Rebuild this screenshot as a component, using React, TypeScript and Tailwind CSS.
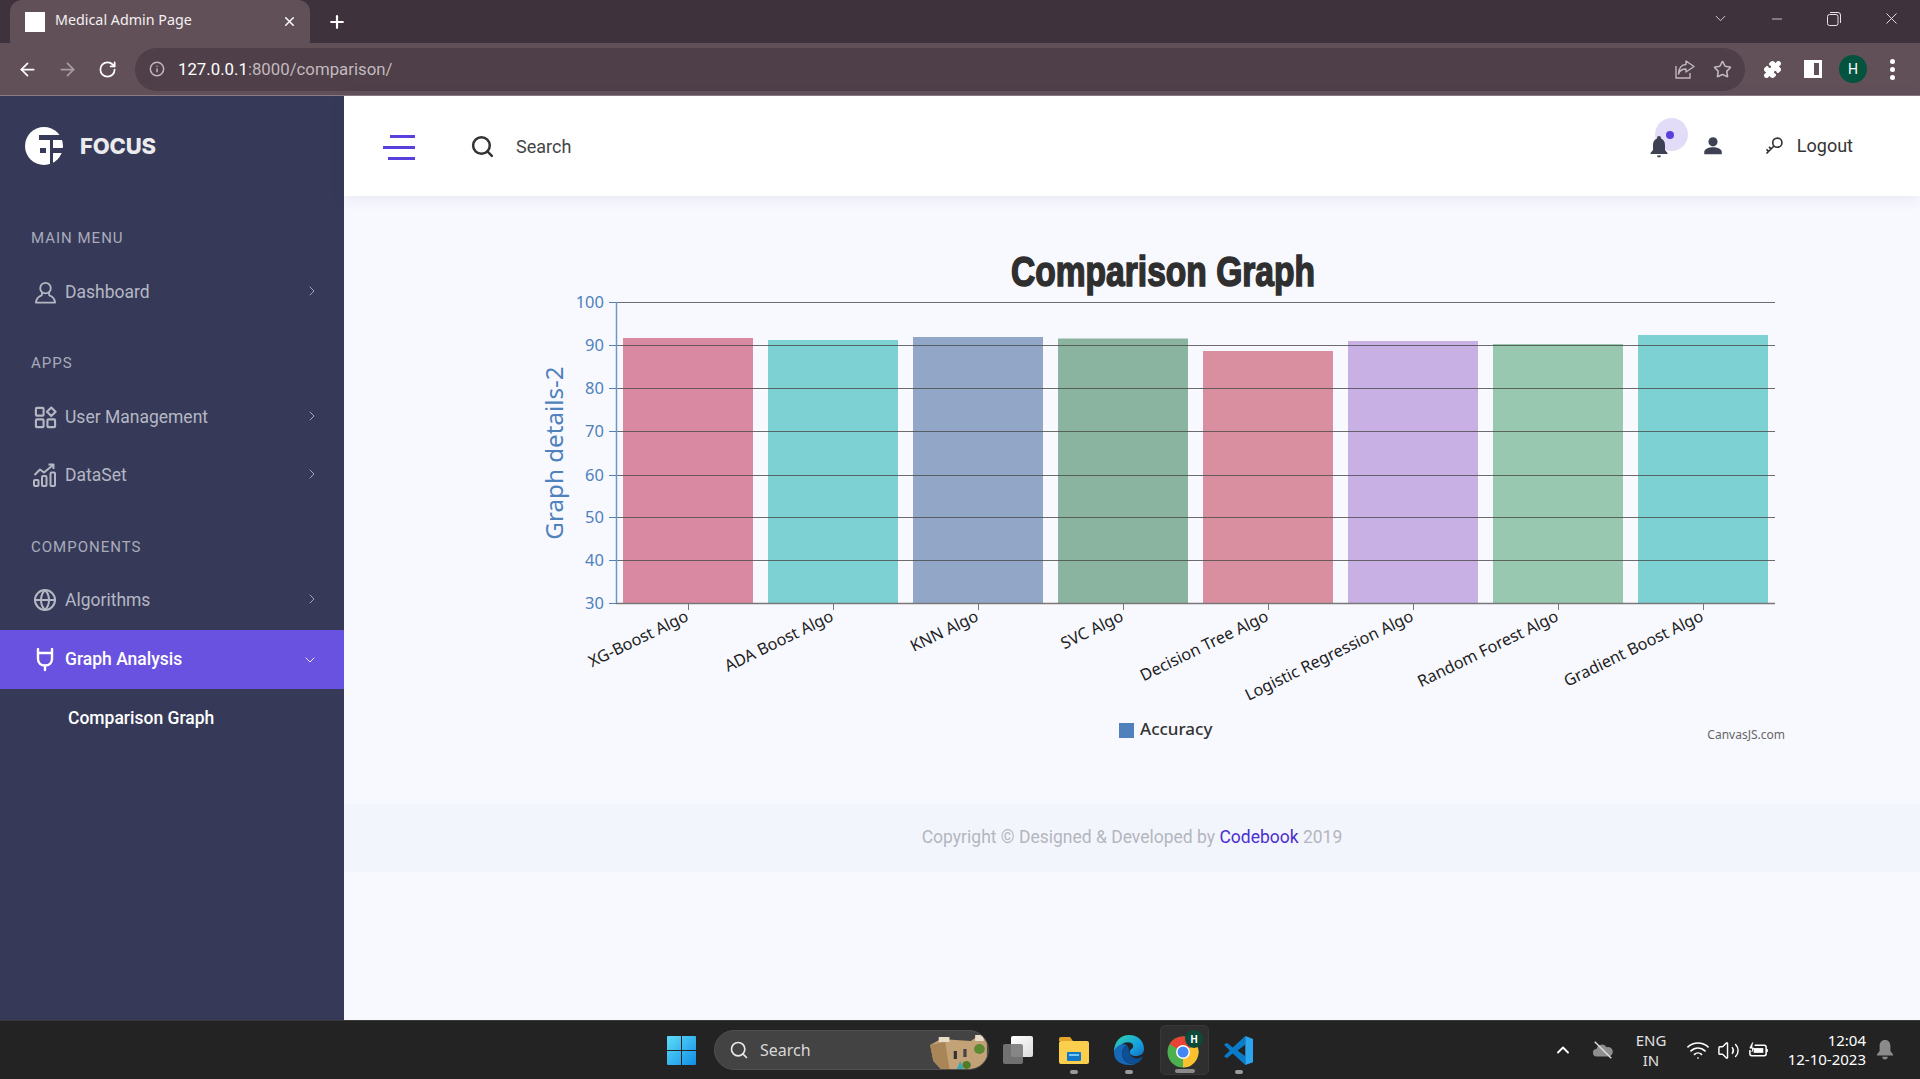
import {
  ArrowLeft, ArrowRight, RotateCw, Info, Star, Puzzle, ChevronRight, ChevronDown, ChevronUp,
  Minus, X, Plus, Search, Globe, Wifi, Volume2,
} from 'lucide-react';

const bars = [
  { x: 623, top: 338, color: '#d989a2' },
  { x: 768, top: 340, color: '#7dd1d3' },
  { x: 913, top: 337, color: '#92a6c8' },
  { x: 1058, top: 338.5, color: '#8ab3a0' },
  { x: 1203, top: 351, color: '#d98f9f' },
  { x: 1348, top: 341, color: '#c8afe4' },
  { x: 1493, top: 344, color: '#98c8b0' },
  { x: 1638, top: 335, color: '#7dd1d3' },
];

const grid = [
  { y: 302, label: '100' },
  { y: 345, label: '90' },
  { y: 388, label: '80' },
  { y: 431, label: '70' },
  { y: 475, label: '60' },
  { y: 517, label: '50' },
  { y: 560, label: '40' },
  { y: 603, label: '30' },
];

const xLabels = [
  { x: 688.5, label: 'XG-Boost Algo' },
  { x: 833.5, label: 'ADA Boost Algo' },
  { x: 978.5, label: 'KNN Algo' },
  { x: 1123.5, label: 'SVC Algo' },
  { x: 1268.5, label: 'Decision Tree Algo' },
  { x: 1413.5, label: 'Logistic Regression Algo' },
  { x: 1558.5, label: 'Random Forest Algo' },
  { x: 1703.5, label: 'Gradient Boost Algo' },
];

function Chart() {
  const font = "'Noto Sans', sans-serif";
  return (
    <svg viewBox="344 196 1576 608" className="block w-[1576px] h-[608px] shrink-0">
      <text x="1163" y="286" fontFamily="'Liberation Sans', sans-serif" fontWeight="700" fontSize="42" textLength="304" lengthAdjust="spacingAndGlyphs" textAnchor="middle" fill="#2f2f2f" stroke="#2f2f2f" strokeWidth="1.6">Comparison Graph</text>
      {bars.map((b) => (
        <rect key={b.x} x={b.x} y={b.top} width="130" height={603 - b.top} fill={b.color} />
      ))}
      {grid.map((g) => (
        <g key={g.y}>
          <line x1="609" x2="616" y1={g.y + 0.5} y2={g.y + 0.5} stroke="#4f81bc" />
          {g.y < 603 && <line x1="616" x2="1775" y1={g.y + 0.5} y2={g.y + 0.5} stroke="#4a4a4a" strokeOpacity="0.8" />}
          <text x="604" y={g.y + 6} textAnchor="end" fontFamily={font} fontSize="16.5" fill="#4f81bc">{g.label}</text>
        </g>
      ))}
      <line x1="616.5" x2="616.5" y1="302" y2="604" stroke="#6d97c9" strokeWidth="1.5" />
      <line x1="616" x2="1775" y1="603.5" y2="603.5" stroke="#777" strokeWidth="1.5" />
      {xLabels.map((l) => (
        <g key={l.x}>
          <line x1={l.x} x2={l.x} y1="604" y2="610" stroke="#777" />
          <text transform={`translate(${l.x + 1} 620) rotate(-26)`} textAnchor="end" fontFamily={font} fontSize="16.2" fill="#222">{l.label}</text>
        </g>
      ))}
      <text transform="translate(563 453) rotate(-90)" textAnchor="middle" fontFamily={font} fontSize="24.2" fill="#4f81bc">Graph details-2</text>
      <rect x="1119" y="723" width="15" height="15" fill="#4f81bc" />
      <text x="1140" y="735" fontFamily={font} fontSize="17" fontWeight="500" fill="#333">Accuracy</text>
      <text x="1785" y="739" textAnchor="end" fontFamily={font} fontSize="12" fill="#666">CanvasJS.com</text>
    </svg>
  );
}

function LogoMark() {
  return (
    <svg viewBox="0 0 38 38" className="w-[38px] h-[38px] shrink-0">
      <circle cx="19" cy="19" r="19" fill="#fff" />
      <path d="M14 8h24v5H14zM15 21h6v5h-6zM25 13h3v25h-3zM28 21h10v5H28z" fill="#363a58" />
    </svg>
  );
}

function PersonIcon() {
  return (
    <svg viewBox="0 0 24 24" fill="none" stroke="currentColor" strokeWidth="1.9" className="w-[23px] h-[23px]">
      <circle cx="12" cy="7.5" r="5.5" />
      <path d="M8.5 12 L8 15 C5 16 2.5 18 2 22.5 H22 C21.5 18 19 16 16 15 L15.5 12" strokeLinejoin="round" />
    </svg>
  );
}

function AppsIcon() {
  return (
    <svg viewBox="0 0 24 24" fill="none" stroke="currentColor" strokeWidth="2.2" className="w-[23px] h-[23px]">
      <rect x="2" y="2" width="8" height="8" rx="1" />
      <rect x="2" y="14" width="8" height="8" rx="1" />
      <rect x="14" y="14" width="8" height="8" rx="1" />
      <path d="M18 1.5 L22.5 6 L18 10.5 L13.5 6Z" strokeLinejoin="round" />
    </svg>
  );
}

function DataIcon() {
  return (
    <svg viewBox="0 0 24 24" fill="none" stroke="currentColor" strokeWidth="2" className="w-[24px] h-[24px]">
      <rect x="1" y="17" width="4.5" height="6" rx="1" />
      <rect x="9" y="13" width="4.5" height="10" rx="1" />
      <rect x="17.5" y="9.5" width="4.5" height="13.5" rx="1" />
      <path d="M1.5 12 L7 6.5 L11 9.5 L20 2 M15.5 1.5 H20.5 V6" strokeLinejoin="round" />
    </svg>
  );
}

function PlugIcon() {
  return (
    <svg viewBox="0 0 24 24" fill="none" stroke="currentColor" strokeWidth="2.4" className="w-[24px] h-[24px]">
      <path d="M5 1 V5 H19 V1 M5 5 V11 C5 15 8 17.5 12 17.5 C16 17.5 19 15 19 11 V5 M12 17.5 V22" strokeLinecap="round" />
    </svg>
  );
}

function MenuItem({ icon, label, active, className = '' }: { icon: React.ReactNode; label: string; active?: boolean; className?: string }) {
  return (
    <div className={`flex items-center shrink-0 pl-[33px] pr-[24px] ${active ? 'h-[59px] bg-[#6a52e0] text-white font-medium' : 'h-[58px] text-[#b5b7c4]'} ${className}`}>
      <span className="w-[24px] flex justify-center">{icon}</span>
      <span className="ml-[8px] flex-1 text-[17.5px]">{label}</span>
      {active ? <ChevronDown className="mr-[2px] w-[16px] h-[16px]" strokeWidth={1.3} /> : <ChevronRight className="w-[16px] h-[16px] -mt-[2px]" strokeWidth={1.3} />}
    </div>
  );
}

function SectionLabel({ children, className }: { children: string; className: string }) {
  return <div className={`h-[22px] leading-[22px] pl-[31px] text-[15px] tracking-[1px] text-[#a9abbb] shrink-0 ${className}`}>{children}</div>;
}

function Sidebar() {
  return (
    <aside className="w-[344px] shrink-0 bg-[#363a58] flex flex-col font-[Roboto,sans-serif]">
      <div className="h-[100px] shrink-0 flex items-center pl-[25px] gap-[17px]">
        <LogoMark />
        <span className="text-white font-[Inter,sans-serif] font-extrabold text-[22px] tracking-[-0.2px] opacity-90">FOCUS</span>
      </div>
      <SectionLabel className="mt-[31px] mb-[14px]">MAIN MENU</SectionLabel>
      <MenuItem icon={<PersonIcon />} label="Dashboard" />
      <SectionLabel className="mt-[31px] mb-[14px]">APPS</SectionLabel>
      <MenuItem icon={<AppsIcon />} label="User Management" />
      <MenuItem icon={<DataIcon />} label="DataSet" />
      <SectionLabel className="mt-[32px] mb-[13px]">COMPONENTS</SectionLabel>
      <MenuItem icon={<Globe className="w-[24px] h-[24px]" strokeWidth={2} />} label="Algorithms" className="mb-[1px]" />
      <MenuItem icon={<PlugIcon />} label="Graph Analysis" active />
      <div className="h-[58px] shrink-0 flex items-center pl-[68px] text-white text-[17.5px] font-medium">Comparison Graph</div>
    </aside>
  );
}

function TopHeader() {
  return (
    <header className="relative z-10 h-[100px] shrink-0 bg-white shadow-[0_2px_14px_rgba(60,60,110,0.1)] flex items-center font-[Roboto,sans-serif] text-[#333]">
      <div className="ml-[39px] mt-[2px] w-[32px] flex flex-col items-end gap-[8px]">
        <span className="block w-[25px] h-[3px] bg-[#5a3fdc]" />
        <span className="block w-[32px] h-[3px] bg-[#5a3fdc]" />
        <span className="block w-[27px] h-[3px] bg-[#5a3fdc]" />
      </div>
      <Search className="ml-[55px] w-[25px] h-[25px] text-[#333]" strokeWidth={2.4} />
      <span className="ml-[21px] text-[18px] text-[#444]">Search</span>
      <div className="ml-auto flex items-center pr-[67px]">
        <div className="relative w-[24px] h-[24px] flex items-center justify-center">
          <span className="absolute left-[8px] top-[-16px] w-[33px] h-[33px] rounded-full bg-[#e2dcf8] flex items-center justify-center">
            <span className="block w-[8px] h-[8px] rounded-full bg-[#5a3fdc] mr-[3px]" />
          </span>
          <svg viewBox="0 0 24 24" className="relative w-[24px] h-[24px] text-[#3e4154]" fill="currentColor">
            <path d="M12 2a2 2 0 0 0-2 2v.6C7.4 5.5 6 8 6 11v5l-2.5 3v1h17v-1L18 16v-5c0-3-1.4-5.5-4-6.4V4a2 2 0 0 0-2-2zM10 21.5a2 2 0 0 0 4 0z" />
          </svg>
        </div>
        <svg viewBox="0 0 24 24" className="ml-[32px] w-[20px] h-[20px] text-[#3e4154]" fill="currentColor">
          <circle cx="12" cy="7" r="5.5" />
          <path d="M1.5 22v-3c0-3 5-5.5 10.5-5.5S22.5 16 22.5 19v3z" />
        </svg>
        <svg viewBox="0 0 24 24" className="ml-[41px] w-[20px] h-[20px] text-[#333]" fill="none" stroke="currentColor" strokeWidth="2">
          <circle cx="16" cy="8" r="5.5" />
          <path d="M12 12 L3 21 M5.5 18.5 L3 16 M8.5 15.5 L6 13" />
        </svg>
        <span className="ml-[13px] pb-[2px] text-[18px] text-[#333]">Logout</span>
      </div>
    </header>
  );
}

function BrowserChrome() {
  return (
    <div className="shrink-0 font-['Noto_Sans',sans-serif]">
      <div className="h-[43px] bg-[#3e333c] flex items-end text-white">
        <div className="ml-[10px] w-[300px] h-[43px] bg-[#625059] rounded-t-[12px] flex items-center pl-[15px] pr-[13px]">
          <span className="block w-[20px] h-[20px] bg-white" />
          <span className="ml-[10px] flex-1 text-[14.3px] leading-none pb-[2px] text-[#f4f0f2]">Medical Admin Page</span>
          <X className="w-[15px] h-[15px]" strokeWidth={2.4} />
        </div>
        <Plus className="ml-[17px] mb-[11px] w-[20px] h-[20px]" strokeWidth={2.6} />
        <div className="ml-auto h-[43px] flex items-center text-[#e9e3e6] pb-[6px]">
          <ChevronDown className="w-[17px] h-[17px]" strokeWidth={1.2} />
          <Minus className="ml-[40px] w-[16px] h-[16px]" strokeWidth={1.2} />
          <svg viewBox="0 0 14 14" className="ml-[42px] w-[14px] h-[14px]" fill="none" stroke="currentColor">
            <rect x="0.5" y="2.5" width="10.5" height="11" rx="2" />
            <path d="M3 .5 h8 a2.5 2.5 0 0 1 2.5 2.5 v8" />
          </svg>
          <X className="ml-[41px] mr-[19px] w-[19px] h-[19px]" strokeWidth={1.2} />
        </div>
      </div>
      <div className="h-[53px] bg-[#625059] border-b border-[#8a7a83] flex items-center text-white">
        <ArrowLeft className="ml-[17px] w-[21px] h-[21px]" strokeWidth={2} />
        <ArrowRight className="ml-[19px] w-[21px] h-[21px] text-[#a99ca3]" strokeWidth={2} />
        <RotateCw className="ml-[20px] w-[19px] h-[19px]" strokeWidth={2.2} />
        <div className="ml-[18px] w-[1610px] h-[43px] rounded-full bg-[#4e3f49] flex items-center pl-[14px] pr-[13px]">
          <Info className="w-[16px] h-[16px] text-[#c2b8bd]" strokeWidth={2.2} />
          <span className="ml-[13px] mt-[1px] flex-1 text-[16.8px] font-[Roboto,sans-serif] text-[#c3b9be]"><span className="text-white">127.0.0.1</span>:8000/comparison/</span>
          <svg viewBox="0 0 20 20" className="mr-[2px] w-[20px] h-[20px] text-[#c2b8bd]" fill="none" stroke="currentColor" strokeWidth="1.4">
            <path d="M1 7 V19 H15 V14" />
            <path d="M11 2 L19 7.5 L11 13 V10 C7 10 4.5 12 3.5 15 C3.5 9.5 6.5 5.5 11 5.5Z" strokeLinejoin="round" />
          </svg>
          <Star className="ml-[16px] w-[19px] h-[19px] text-[#c2b8bd]" strokeWidth={2} />
        </div>
        <Puzzle className="ml-[18px] w-[19px] h-[19px]" fill="#fff" strokeWidth={1.5} />
        <span className="ml-[22px] block w-[18px] h-[18px] border-[3px] border-white border-l-[10px] bg-transparent" />
        <span className="ml-[17px] w-[28px] h-[28px] rounded-full bg-[#03533f] flex items-center justify-center text-[14px] font-[Roboto,sans-serif]">H</span>
        <span className="ml-[23px] flex flex-col gap-[3px]">
          <span className="block w-[5px] h-[5px] rounded-full bg-white" />
          <span className="block w-[5px] h-[5px] rounded-full bg-white" />
          <span className="block w-[5px] h-[5px] rounded-full bg-white" />
        </span>
      </div>
    </div>
  );
}

function TaskIcon({ dot, children, className }: { dot?: string; children: React.ReactNode; className: string }) {
  return (
    <div className={`relative h-[50px] flex items-center justify-center shrink-0 ${className}`}>
      {children}
      {dot && <span className={`absolute bottom-[1px] h-[4px] rounded-full bg-[#9a9a9a] ${dot}`} />}
    </div>
  );
}

function Taskbar() {
  return (
    <div className="h-[59px] shrink-0 bg-[#232323] border-t border-[#3a3a3a] flex items-center text-white font-['Noto_Sans',sans-serif]">
      <svg viewBox="0 0 29 29" className="ml-[667px] w-[29px] h-[29px] shrink-0">
        <defs>
          <linearGradient id="w" x1="0" y1="0" x2="1" y2="1">
            <stop offset="0" stopColor="#5fdcf8" />
            <stop offset="1" stopColor="#0f8ee6" />
          </linearGradient>
        </defs>
        <path d="M1 0h13v14H0V1a1 1 0 0 1 1-1zM15 0h13a1 1 0 0 1 1 1v13H15zM0 15h14v14H1a1 1 0 0 1-1-1zM15 15h14v13a1 1 0 0 1-1 1H15z" fill="url(#w)" />
      </svg>
      <div className="ml-[18px] w-[275px] h-[40px] shrink-0 rounded-full bg-[#434343] border border-[#505050] flex items-center pl-[14px] overflow-hidden">
        <Search className="w-[20px] h-[20px] text-[#e8e8e8]" strokeWidth={2} />
        <span className="ml-[11px] flex-1 text-[16px] text-[#d8d8d8]">Search</span>
        <svg viewBox="0 0 56 36" preserveAspectRatio="none" className="w-[60px] h-[36px] shrink-0 mt-[2px]">
          <path d="M2 12 L12 6 L40 8 L48 2 L55 8 V26 L50 36 H12 L5 28Z" fill="#c4a277" />
          <path d="M2 12 L16 9 L20 36 H12 L5 28Z" fill="#a88658" />
          <rect x="10" y="4" width="10" height="5" fill="#e8dcc8" />
          <rect x="44" y="2" width="8" height="6" fill="#e8dcc8" />
          <rect x="24" y="18" width="3" height="8" fill="#333" />
          <rect x="33" y="16" width="3" height="8" fill="#444" />
          <circle cx="48" cy="16" r="5" fill="#5c8a32" />
          <circle cx="36" cy="32" r="4" fill="#4f7c2b" />
          <path d="M27 36 L30 28 L33 36Z" fill="#3aa7b8" />
        </svg>
      </div>
      <TaskIcon className="ml-[13px] w-[32px]">
        <span className="relative block w-[30px] h-[28px]">
          <span className="absolute right-0 top-0 w-[22px] h-[21px] rounded-[2px] bg-gradient-to-br from-white to-[#dcdcdc]" />
          <span className="absolute left-0 bottom-0 w-[20px] h-[20px] rounded-[2px] bg-[#7a7a7a]/90" />
        </span>
      </TaskIcon>
      <TaskIcon className="ml-[24px] w-[32px]" dot="w-[8px]">
        <svg viewBox="0 0 30 28" className="w-[30px] h-[28px]">
          <path d="M0 3a2 2 0 0 1 2-2h9l3 4H0z" fill="#e3a42a" />
          <rect x="0" y="5" width="30" height="23" rx="2" fill="#fbcf4d" />
          <rect x="8" y="16" width="14" height="9" rx="1" fill="#0f78c9" />
          <rect x="10" y="18" width="10" height="2" fill="#7cc6f5" />
        </svg>
      </TaskIcon>
      <TaskIcon className="ml-[23px] w-[31px]" dot="w-[8px]">
        <svg viewBox="0 0 30 30" className="w-[30px] h-[30px]">
          <defs>
            <linearGradient id="e" x1="0" y1="0" x2="1" y2="1">
              <stop offset="0" stopColor="#2dd4a7" />
              <stop offset="0.6" stopColor="#17a3e0" />
              <stop offset="1" stopColor="#0f6fc0" />
            </linearGradient>
          </defs>
          <path d="M15 0C24 0 30 6 30 14C30 19 26 21 22 21C18 21 15 19 16 16C17 13 20 14 19 10C18 7 12 6 7 10C3 13 1 15 0 17C0 7 6 0 15 0Z" fill="url(#e)" />
          <path d="M0 17C2 10 9 8 13 10C8 13 7 18 9 23C11 28 17 30 23 28C20 30 17 30 15 30C6 30 0 25 0 17Z" fill="#1769b8" />
          <path d="M13 10C8 13 7 18 9 23C11 28 17 30 23 28C26 27 28 24 29 21C25 25 18 24 16 19C15 16 15 12 13 10Z" fill="#0d4f94" />
        </svg>
      </TaskIcon>
      <div className="ml-[16px] relative w-[49px] h-[50px] shrink-0 rounded-[5px] bg-[#2f2f2f] border border-[#383838] flex items-center justify-center">
        <svg viewBox="0 0 32 32" className="w-[32px] h-[32px] -ml-[3px] mt-[3px]">
          <circle cx="16" cy="16" r="11" fill="none" stroke="#4caf50" strokeWidth="9" />
          <path d="M6.5 10.5 A11 11 0 0 1 25.5 10.5" fill="none" stroke="#ea4335" strokeWidth="9" />
          <path d="M25.5 10.5 A11 11 0 0 1 16 27" fill="none" stroke="#fbc02d" strokeWidth="9" />
          <circle cx="16" cy="16" r="7" fill="#fff" />
          <circle cx="16" cy="16" r="5.5" fill="#4285f4" />
        </svg>
        <span className="absolute top-[4px] right-[5px] w-[18px] h-[18px] rounded-full bg-[#0d4a3b] text-[10px] font-bold flex items-center justify-center">H</span>
        <span className="absolute bottom-[1px] w-[20px] h-[4px] rounded-full bg-[#8a8a8a]" />
      </div>
      <TaskIcon className="ml-[14px] w-[31px]" dot="w-[8px]">
        <svg viewBox="0 0 32 32" className="w-[31px] h-[31px]">
          <path d="M23 1 L10 13 L4 8 L1 10 L7 16 L1 22 L4 24 L10 19 L23 31Z M23 10 L15 16 L23 22Z" fillRule="evenodd" fill="#0a7bc6" />
          <path d="M23 1 L31 4 V28 L23 31Z" fill="#2aa5ee" />
        </svg>
      </TaskIcon>
      <ChevronUp className="ml-[299px] w-[20px] h-[20px] text-white shrink-0" strokeWidth={2.2} />
      <svg viewBox="0 0 24 20" className="ml-[19px] w-[22px] h-[20px] shrink-0">
        <path d="M5 17a4 4 0 0 1 0-8 6 6 0 0 1 11-2 5 5 0 0 1 3 10z" fill="#8f8f8f" />
        <path d="M3 1 L21 19" stroke="#e0e0e0" strokeWidth="1.5" />
      </svg>
      <div className="ml-[12px] w-[50px] shrink-0 text-center text-[15px] leading-[20px] text-[#e0e0e0]">
        <div>ENG</div>
        <div>IN</div>
      </div>
      <Wifi className="ml-[10px] w-[24px] h-[24px] shrink-0" strokeWidth={1.7} />
      <Volume2 className="ml-[7px] w-[23px] h-[23px] shrink-0" strokeWidth={1.5} />
      <svg viewBox="0 0 22 18" className="ml-[8px] w-[21px] h-[18px] shrink-0" fill="none" stroke="#fff" strokeWidth="1.6">
        <path d="M7 4H17a2 2 0 0 1 2 2v7a2 2 0 0 1-2 2H4a2 2 0 0 1-2-2V9" />
        <path d="M20 8v3" />
        <path d="M5 1 L2 7 H6 L4 11" fill="#fff" strokeWidth="1" />
        <rect x="6" y="7" width="10" height="5" fill="#fff" stroke="none" />
      </svg>
      <div className="ml-auto text-right text-[15px] leading-[19px] text-white">
        <div>12:04</div>
        <div>12-10-2023</div>
      </div>
      <svg viewBox="0 0 20 22" className="ml-[10px] mr-[26px] w-[18px] h-[20px] shrink-0" fill="#8a8a8a">
        <path d="M10 0C6 0 4 3 4 7v5l-3 4v1h18v-1l-3-4V7c0-4-2-7-6-7zM7 18.5a3 3 0 0 0 6 0z" />
      </svg>
    </div>
  );
}

export default function App() {
  return (
    <div className="w-[1920px] h-[1079px] flex flex-col overflow-hidden bg-[#f8f9ff]">
      <BrowserChrome />
      <div className="flex-1 flex min-h-0">
        <Sidebar />
        <div className="flex-1 flex flex-col min-w-0">
          <TopHeader />
          <Chart />
          <footer className="h-[68px] shrink-0 pb-[2px] bg-[#f3f5fc] flex items-center justify-center font-[Roboto,sans-serif] text-[17.5px] text-[#b4b6bf]">
            <span>Copyright © Designed &amp; Developed by <span className="text-[#4a2fd0]">Codebook</span> 2019</span>
          </footer>
        </div>
      </div>
      <Taskbar />
    </div>
  );
}
